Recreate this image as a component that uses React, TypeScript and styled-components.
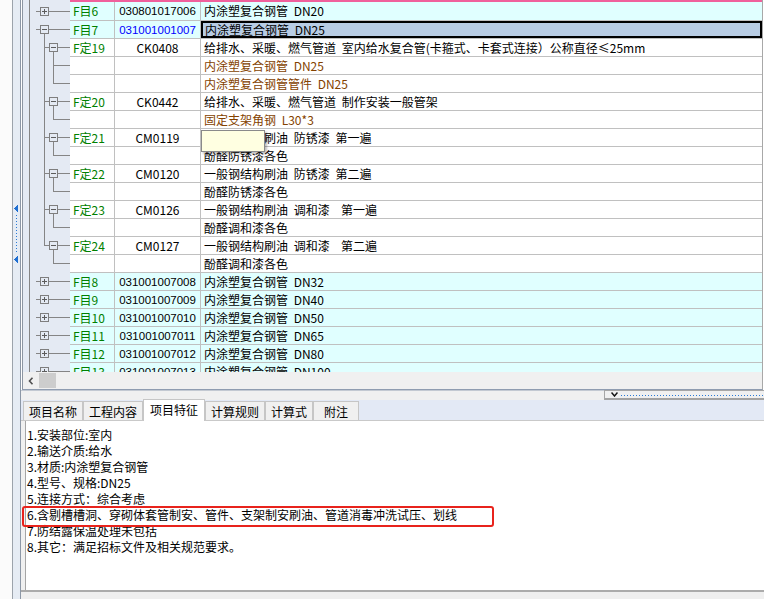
import React from 'react';
import styled, { createGlobalStyle } from 'styled-components';

const GlobalStyle = createGlobalStyle`
  html, body { margin: 0; padding: 0; background: #ffffff; }
  body {
    width: 764px; height: 599px; overflow: hidden;
    font-family: "Noto Sans CJK SC", "Noto Sans", sans-serif;
    font-size: 12px; color: #000;
  }
  #root { width: 764px; height: 599px; }
`;

const Page = styled.div`
  display: flex;
  width: 764px;
  height: 599px;
  background: #fff;
`;

const Gutter = styled.div`
  width: 12px;
  flex: none;
  background: #fbfbfb;
`;

const SideSplitter = styled.div`
  width: 7px;
  flex: none;
  border-left: 1px solid #9ca3ab;
  border-right: 1px solid #8c97a6;
  background: #e6ecf4;
  display: flex;
  justify-content: center;
  padding-top: 205px;
`;

const Main = styled.div`
  width: 743px;
  flex: none;
  display: flex;
  flex-direction: column;
  background: #fff;
`;

const GridFrame = styled.div`
  margin-left: 1px;
  width: 741px;
  height: 390px;
  flex: none;
  box-sizing: border-box;
  border-left: 1px solid #8d96a2;
  border-right: 1px solid #a8a8a8;
  border-bottom: 1px solid #8f9cb0;
  display: flex;
  flex-direction: column;
`;

const Body = styled.div`
  height: 372px;
  flex: none;
  overflow: hidden;
  position: relative;
  background: #fff;
`;

const Row = styled.div<{ $h: number }>`
  display: flex;
  height: ${p => p.$h}px;
`;

const TreeCell = styled.div`
  width: 47px;
  flex: none;
  background: #e4eaf3;
  display: flex;
`;

const PinkBar = styled.div`
  flex: 1;
  background: #f0609c;
`;

const CellBase = styled.div`
  box-sizing: border-box;
  border-bottom: 1px solid #c0c0c0;
  display: flex;
  align-items: center;
  white-space: pre;
  overflow: hidden;
  line-height: 16px;
`;

const CodeCell = styled(CellBase)<{ $bg: string }>`
  width: 45px;
  flex: none;
  border-right: 1px solid #c0c0c0;
  background: ${p => p.$bg};
  color: #008000;
  padding-left: 3px;
`;

const NumCell = styled(CellBase)<{ $bg: string; $digits: boolean; $blue: boolean }>`
  width: 86px;
  flex: none;
  border-right: 1px solid #c0c0c0;
  background: ${p => p.$bg};
  justify-content: center;
  color: ${p => (p.$blue ? '#0000ff' : '#000')};
  font-family: ${p => (p.$digits ? '"Liberation Sans", Arial, sans-serif' : '"Noto Sans CJK SC", sans-serif')};
  font-size: ${p => (p.$digits ? '11.5px' : '12px')};
`;

const NameCell = styled(CellBase)<{ $bg: string; $color: string; $selected: boolean }>`
  flex: 1;
  background: ${p => (p.$selected ? '#b8cce4' : p.$bg)};
  color: ${p => p.$color};
  padding-left: ${p => (p.$selected ? '4px' : '3px')};
  word-spacing: 3px;
  box-shadow: ${p => (p.$selected ? 'inset 0 0 0 2px #000' : 'none')};
`;

const Tooltip = styled.div`
  position: absolute;
  left: 178px;
  top: 130px;
  width: 64px;
  height: 22px;
  box-sizing: border-box;
  background: #ffffe1;
  border: 1px solid #8a8a8a;
  box-shadow: 2px 2px 2px rgba(0, 0, 0, 0.25);
`;

const HScroll = styled.div`
  height: 17px;
  flex: none;
  display: flex;
  background: #f0f0f0;
`;

const ScrollBtn = styled.div`
  width: 16px;
  display: flex;
  align-items: center;
  justify-content: center;
`;

const Thumb = styled.div`
  width: 17px;
  margin: 1px 0;
  background: #cdcdcd;
`;

const Bottom = styled.div`
  flex: 1;
  display: flex;
  flex-direction: column;
  background: #f0f0f0;
`;

const SplitRow = styled.div`
  height: 10px;
  flex: none;
  display: flex;
`;

const SplitFill = styled.div`
  flex: 1;
  border-top: 1px solid #c3c9d2;
`;

const SplitBox = styled.div`
  width: 160px;
  box-sizing: border-box;
  border-top: 1px solid #a6a6a6;
  border-left: 1px solid #a6a6a6;
  border-bottom: 2px solid #a3a3a3;
  display: flex;
  align-items: center;
  padding-left: 6px;
  gap: 3px;
`;

const Dots = styled.div`
  flex: 1;
  height: 1px;
  margin-top: 1px;
  background: repeating-linear-gradient(to right, #2a7ad6 0 1px, transparent 1px 3px);
`;

const TabBar = styled.div`
  height: 21px;
  flex: none;
  box-sizing: border-box;
  border-bottom: 1px solid #c9c9c9;
  background: #e3e9f5;
  padding-left: 2px;
  display: flex;
  align-items: flex-end;
`;

const Tab = styled.div<{ $active: boolean }>`
  position: relative;
  z-index: ${p => (p.$active ? 2 : 1)};
  height: ${p => (p.$active ? 22 : 19)}px;
  margin-bottom: ${p => (p.$active ? -1 : 0)}px;
  min-width: 46px;
  box-sizing: border-box;
  padding: ${p => (p.$active ? '0 6px 2px' : '0 5px')};
  border: 1px solid #c6c6c6;
  border-bottom: none;
  background: ${p => (p.$active ? '#ffffff' : '#f0f0f0')};
  display: flex;
  align-items: center;
  justify-content: center;
  font-size: 12px;
  white-space: nowrap;
`;

const ContentWrap = styled.div`
  flex: 1;
  display: flex;
  padding-left: 4px;
  border-bottom: 2px solid #ababab;
  background: #f0f0f0;
`;

const TextPanel = styled.div`
  flex: 1;
  position: relative;
  background: #fff;
  border-left: 1px solid #a5a5a5;
  padding: 6px 0 0 1px;
  line-height: 16px;
  font-size: 12px;
  word-spacing: 3px;
`;

const Line = styled.div`
  height: 16px;
  white-space: pre;
`;

const Highlight = styled.div`
  position: absolute;
  left: -4px;
  top: 85px;
  width: 472px;
  height: 21px;
  box-sizing: border-box;
  border: 2px solid #e8231c;
  border-radius: 3px;
`;

const Footer = styled.div`
  height: 7px;
  flex: none;
  background: #efefef;
`;

type Seg = 'none' | 'full' | 'top' | 'bottom';
type Kind = 'item' | 'quota' | 'sub';

interface RowData {
  kind: Kind;
  code?: string;
  num?: string;
  name: string;
  expanded?: boolean;
  l1?: Seg;
  l2?: Seg;
  selected?: boolean;
  blue?: boolean;
  brown?: boolean;
}

const rows: RowData[] = [
  { kind: 'item', code: 'F目6', num: '030801017006', name: '内涂塑复合钢管 DN20' },
  { kind: 'item', code: 'F目7', num: '031001001007', name: '内涂塑复合钢管 DN25', expanded: true, l1: 'bottom', selected: true, blue: true },
  { kind: 'quota', code: 'F定19', num: 'CK0408', name: '给排水、采暖、燃气管道 室内给水复合管(卡箍式、卡套式连接）公称直径≤25mm', l1: 'full', l2: 'bottom' },
  { kind: 'sub', name: '内涂塑复合钢管 DN25', l1: 'full', l2: 'full', brown: true },
  { kind: 'sub', name: '内涂塑复合钢管管件 DN25', l1: 'full', l2: 'top', brown: true },
  { kind: 'quota', code: 'F定20', num: 'CK0442', name: '给排水、采暖、燃气管道 制作安装一般管架', l1: 'full', l2: 'bottom' },
  { kind: 'sub', name: '固定支架角钢 L30*3', l1: 'full', l2: 'top', brown: true },
  { kind: 'quota', code: 'F定21', num: 'CM0119', name: '一般钢结构刷油 防锈漆 第一遍', l1: 'full', l2: 'bottom' },
  { kind: 'sub', name: '酚醛防锈漆各色', l1: 'full', l2: 'top' },
  { kind: 'quota', code: 'F定22', num: 'CM0120', name: '一般钢结构刷油 防锈漆 第二遍', l1: 'full', l2: 'bottom' },
  { kind: 'sub', name: '酚醛防锈漆各色', l1: 'full', l2: 'top' },
  { kind: 'quota', code: 'F定23', num: 'CM0126', name: '一般钢结构刷油 调和漆  第一遍', l1: 'full', l2: 'bottom' },
  { kind: 'sub', name: '酚醛调和漆各色', l1: 'full', l2: 'top' },
  { kind: 'quota', code: 'F定24', num: 'CM0127', name: '一般钢结构刷油 调和漆  第二遍', l1: 'top', l2: 'bottom' },
  { kind: 'sub', name: '酚醛调和漆各色', l1: 'none', l2: 'top' },
  { kind: 'item', code: 'F目8', num: '031001007008', name: '内涂塑复合钢管 DN32' },
  { kind: 'item', code: 'F目9', num: '031001007009', name: '内涂塑复合钢管 DN40' },
  { kind: 'item', code: 'F目10', num: '031001007010', name: '内涂塑复合钢管 DN50' },
  { kind: 'item', code: 'F目11', num: '031001007011', name: '内涂塑复合钢管 DN65' },
  { kind: 'item', code: 'F目12', num: '031001007012', name: '内涂塑复合钢管 DN80' },
  { kind: 'item', code: 'F目13', num: '031001007013', name: '内涂塑复合钢管 DN100' },
];

const features = [
  '1.安装部位:室内',
  '2.输送介质:给水',
  '3.材质:内涂塑复合钢管',
  '4.型号、规格:DN25',
  '5.连接方式：综合考虑',
  '6.含剔槽槽洞、穿砌体套管制安、管件、支架制安刷油、管道消毒冲洗试压、划线',
  '7.防结露保温处理未包括',
  '8.其它：满足招标文件及相关规范要求。',
];

const tabs = ['项目名称', '工程内容', '项目特征', '计算规则', '计算式', '附注'];

const LINE = '#858585';
const BOX = '#7e7e7e';
const SIGN = '#5c5c5c';

function vSeg(x: number, seg: Seg | undefined, cy: number, h: number, key: string) {
  if (!seg || seg === 'none') return null;
  let y1 = 0;
  let y2 = h;
  if (seg === 'top') y2 = cy + 0.5;
  if (seg === 'bottom') y1 = cy + 4;
  return <path key={key} d={`M${x} ${y1}V${y2}`} stroke={LINE} />;
}

function TreeGlyph({ row, h }: { row: RowData; h: number }) {
  const cy = (h === 19 ? 9 : 8) + 0.5;
  const parts: React.ReactNode[] = [];
  parts.push(<path key="root" d={`M6.5 0V${h}`} stroke={LINE} />);
  parts.push(vSeg(21.5, row.l1, cy, h, 'l1'));
  parts.push(vSeg(30.5, row.l2, cy, h, 'l2'));
  if (row.kind === 'item') {
    parts.push(<path key="d" d={`M13 ${cy}H17`} stroke={LINE} />);
    parts.push(<rect key="b" x={17.5} y={cy - 4} width={8} height={8} fill="none" stroke={BOX} />);
    parts.push(<path key="r" d={`M25.5 ${cy}H47`} stroke={LINE} />);
    parts.push(<path key="s" d={`M19 ${cy}H24`} stroke={SIGN} />);
    if (!row.expanded) parts.push(<path key="p" d={`M21.5 ${cy - 2.5}V${cy + 2.5}`} stroke={SIGN} />);
  } else if (row.kind === 'quota') {
    parts.push(<path key="d" d={`M21.5 ${cy}H26`} stroke={LINE} />);
    parts.push(<rect key="b" x={26.5} y={cy - 4} width={8} height={8} fill="none" stroke={BOX} />);
    parts.push(<path key="r" d={`M34.5 ${cy}H47`} stroke={LINE} />);
    parts.push(<path key="s" d={`M28 ${cy}H33`} stroke={SIGN} />);
  } else {
    parts.push(<path key="c" d={`M30.5 ${cy}H47`} stroke={LINE} />);
  }
  return (
    <svg width={47} height={h} shapeRendering="crispEdges" style={{ display: 'block' }}>
      {parts}
    </svg>
  );
}

function GridRow({ row, first }: { row: RowData; first: boolean }) {
  const h = first ? 19 : 18;
  const bg = row.kind === 'item' ? '#e0ffff' : '#ffffff';
  const color = row.brown ? '#844200' : '#000';
  return (
    <Row $h={h}>
      <TreeCell>
        <TreeGlyph row={row} h={h} />
      </TreeCell>
      <CodeCell $bg={bg}>{row.code ?? ''}</CodeCell>
      <NumCell $bg={bg} $digits={row.kind === 'item'} $blue={!!row.blue}>
        {row.num ?? ''}
      </NumCell>
      <NameCell $bg={bg} $color={color} $selected={!!row.selected}>
        {row.name}
      </NameCell>
    </Row>
  );
}

export default function App() {
  return (
    <>
      <GlobalStyle />
      <Page>
        <Gutter />
        <SideSplitter>
          <svg width={7} height={58} shapeRendering="crispEdges">
            <polygon points="1,3.5 5,0 5,7" fill="#1f6fd2" />
            <path d="M3.5 10V49" stroke="#2a7ad6" strokeDasharray="1 2" />
            <polygon points="1,54.5 5,51 5,58" fill="#1f6fd2" />
          </svg>
        </SideSplitter>
        <Main>
          <GridFrame>
            <Body>
              <Row $h={2}>
                <TreeCell>
                  <svg width={47} height={2} shapeRendering="crispEdges" style={{ display: 'block' }}>
                    <path d="M6.5 0V2" stroke={LINE} />
                  </svg>
                </TreeCell>
                <PinkBar />
              </Row>
              {rows.map((r, i) => (
                <GridRow key={i} row={r} first={i === 0} />
              ))}
              <Tooltip />
            </Body>
            <HScroll>
              <ScrollBtn>
                <svg width={6} height={8}>
                  <path d="M4.5 0.8L1.5 4L4.5 7.2" fill="none" stroke="#505050" strokeWidth={1.6} />
                </svg>
              </ScrollBtn>
              <Thumb />
            </HScroll>
          </GridFrame>
          <Bottom>
            <SplitRow>
              <SplitFill />
              <SplitBox>
                <svg width={7} height={5} style={{ display: 'block' }}>
                  <path d="M0.5 0.5L3.5 4L6.5 0.5" fill="none" stroke="#111" strokeWidth={1.5} />
                </svg>
                <Dots />
              </SplitBox>
            </SplitRow>
            <TabBar>
              {tabs.map(t => (
                <Tab key={t} $active={t === '项目特征'}>
                  {t}
                </Tab>
              ))}
            </TabBar>
            <ContentWrap>
              <TextPanel>
                {features.map(f => (
                  <Line key={f}>{f}</Line>
                ))}
                <Highlight />
              </TextPanel>
            </ContentWrap>
            <Footer />
          </Bottom>
        </Main>
      </Page>
    </>
  );
}
